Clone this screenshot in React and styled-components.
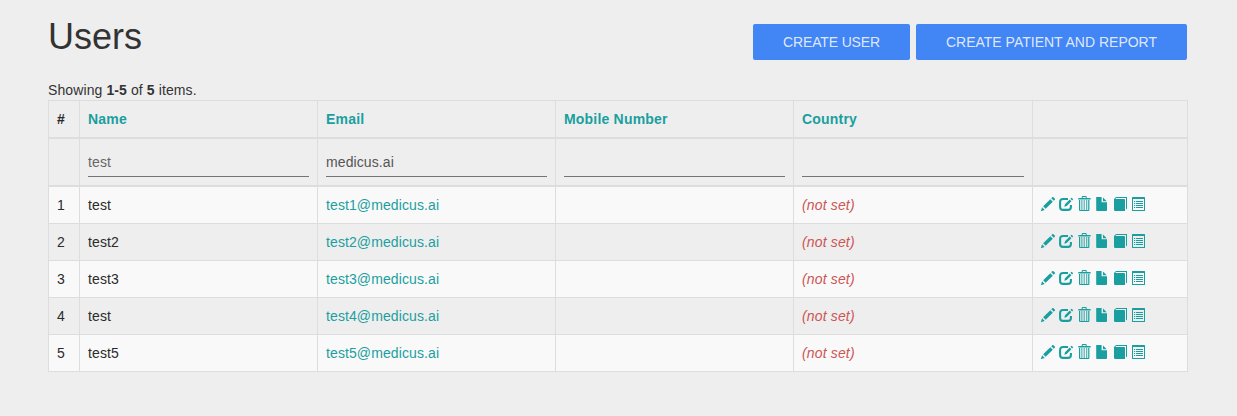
import React from "react";
import styled, { createGlobalStyle } from "styled-components";

const GlobalStyle = createGlobalStyle`
  *, *::before, *::after { box-sizing: border-box; }
  body {
    margin: 0;
    background: #eee;
    color: #333;
    font: 14px/20px "Liberation Sans", Arial, sans-serif;
    letter-spacing: 0.1px;
  }
`;

const Page = styled.main`
  width: 1237px;
  height: 416px;
  padding: 16px 49px 0 48px;
`;

const Header = styled.header`
  display: flex;
  justify-content: space-between;
  height: 64px;
`;

const Title = styled.h1`
  margin: 0;
  font-size: 36px;
  line-height: 42px;
  font-weight: 400;
  letter-spacing: 0;
`;

const Actions = styled.div`
  display: flex;
  gap: 6px;
  padding: 8px 1px 0 0;
`;

const Button = styled.button`
  width: ${(p) => p.$width}px;
  height: 36px;
  padding: 0;
  border: 0;
  border-radius: 2px;
  background: #4285f4;
  color: rgba(255, 255, 255, 0.84);
  font: inherit;
  letter-spacing: ${(p) => p.$spacing || 0}px;
  text-transform: uppercase;
`;

const Summary = styled.div`
  height: 20px;
`;

const Table = styled.div`
  border: 1px solid #ddd;
  border-left: 0;
`;

const Row = styled.div`
  display: grid;
  grid-template-columns: 31px 238px 238px 238px 239px 1fr;
  height: 37px;
  background: ${(p) => (p.$striped ? "#f9f9f9" : "transparent")};
  border-bottom: 1px solid #ddd;
  &:last-child {
    height: 36px;
    border-bottom: 0;
  }
`;

const HeadRow = styled(Row)`
  height: 38px;
  border-bottom-width: 2px;
  color: #1a9fa0;
  font-weight: 700;
  letter-spacing: 0.2px;
`;

const FilterRow = styled(Row)`
  height: 48px;
  border-bottom-width: 2px;
`;

const Cell = styled.div`
  padding: 8px;
  border-left: 1px solid #ddd;
  color: ${(p) => (p.$dark ? "#2b2b2b" : "inherit")};
  white-space: nowrap;
`;

const FilterInput = styled.input`
  display: block;
  width: 100%;
  height: 30px;
  padding: 0;
  border: 0;
  border-bottom: 1px solid #757575;
  border-radius: 0;
  outline: 0;
  background: transparent;
  color: ${(p) => (p.$muted ? "#666" : "#555")};
  font: inherit;
  letter-spacing: inherit;
`;

const EmailLink = styled.a`
  color: #1a9fa0;
`;

const NotSet = styled.em`
  color: #c55;
  letter-spacing: 0.15px;
`;

const IconCell = styled(Cell)`
  display: flex;
  gap: 4px;
`;

const Icon = styled.svg`
  width: 14px;
  height: 14px;
  margin-top: 2px;
  flex: none;
  overflow: visible;
  color: #1a9fa0;
  fill: currentColor;
`;

const Pencil = () => (
  <Icon viewBox="0 0 1200 1200">
    <path
      transform="matrix(1 0 0 -1 0 1200)"
      d="M1011 1210q19 0 33-13l153-153q13-14 13-33t-13-33l-99-92-214 214 95 96q13 14 32 14z M1013 800l-615-614-214 214 614 614z M317 96l-333-112 110 335z"
    />
  </Icon>
);

const Edit = () => (
  <Icon viewBox="0 0 14 14">
    <path
      d="M9 2H4Q1.100 2 1.100 4.900V10q0 2.900 2.900 2.900h5q2.900 0 2.900-2.900V8"
      fill="none"
      stroke="currentColor"
      strokeWidth="2.100"
    />
    <path d="M5.300 9.800l.7-2.600L10.700 2.500l1.700 1.700-4.700 4.700zM11.400 1.800l.9-.9q.3-.3.6 0l1.100 1.100q.3.3 0 .6l-.9.900z" />
  </Icon>
);

const Trash = () => (
  <Icon viewBox="-.7 0 14 14">
    <path
      fillRule="evenodd"
      d="M5 -1h3q1 0 1 1v1h3.500q.5 0 .5.500V2.500H.500V1.500Q.5 1 1 1h3V0q0-1 1-1zm0 1v1h3V0z"
    />
    <path d="M1.300 3h1.200v10h8V3h1.200v10q0 1-1 1H2.300q-1 0-1-1z" />
    <path d="M3.500 3h1.300v10H3.500zM5.900 3h1.300v10H5.900zM8.300 3h1.300v10H8.300z" opacity=".7" />
  </Icon>
);

const File = () => (
  <Icon viewBox="0 0 14 14">
    <path d="M1.200 0H6.600v5.200H12V13.200q0 .8-.8.800H2q-.8 0-.8-.800zM8 .600L11.700 4.300H8z" />
  </Icon>
);

const Book = () => (
  <Icon viewBox="-1 0 14 14">
    <path d="M2 0h11v11.500l-1 1V1H1.300zM0 2.300Q0 1.800.5 1.600L2 0 1.600 2H10q1 0 1 1V14H1.300Q0 14 0 12.700z" />
  </Icon>
);

const ListIcon = () => (
  <Icon viewBox="-1 0 14 14">
    <path
      fillRule="evenodd"
      d="M.500 0h12q.5 0 .5.500v13q0 .5-.5.500H.500q-.5 0-.5-.500V.500Q0 0 .500 0zM1 2v11h11V2z"
    />
    <path d="M2 4h1.200v1H2zM4 4h7v1H4zM2 6h1.200v1H2zM4 6h7v1H4zM2 8h1.200v1H2zM4 8h7v1H4zM2 10h1.200v1H2zM4 10h7v1H4z" />
  </Icon>
);

const users = ["test", "test2", "test3", "test", "test5"];

export default function App() {
  return (
    <Page>
      <GlobalStyle />
      <Header>
        <Title>Users</Title>
        <Actions>
          <Button $width={157} $spacing={-0.15}>
            Create user
          </Button>
          <Button $width={271}>Create patient and report</Button>
        </Actions>
      </Header>
      <Summary>
        Showing <b>1-5</b> of <b>5</b> items.
      </Summary>
      <Table>
        <HeadRow>
          <Cell $dark>#</Cell>
          <Cell>Name</Cell>
          <Cell>Email</Cell>
          <Cell>Mobile Number</Cell>
          <Cell>Country</Cell>
          <Cell />
        </HeadRow>
        <FilterRow>
          <Cell />
          <Cell>
            <FilterInput $muted defaultValue="test" />
          </Cell>
          <Cell>
            <FilterInput defaultValue="medicus.ai" />
          </Cell>
          <Cell>
            <FilterInput />
          </Cell>
          <Cell>
            <FilterInput />
          </Cell>
          <Cell />
        </FilterRow>
        {users.map((name, i) => (
          <Row key={i} $striped={i % 2 === 0}>
            <Cell $dark>{i + 1}</Cell>
            <Cell $dark>{name}</Cell>
            <Cell>
              <EmailLink>test{i + 1}@medicus.ai</EmailLink>
            </Cell>
            <Cell />
            <Cell>
              <NotSet>(not set)</NotSet>
            </Cell>
            <IconCell>
              <Pencil />
              <Edit />
              <Trash />
              <File />
              <Book />
              <ListIcon />
            </IconCell>
          </Row>
        ))}
      </Table>
    </Page>
  );
}
